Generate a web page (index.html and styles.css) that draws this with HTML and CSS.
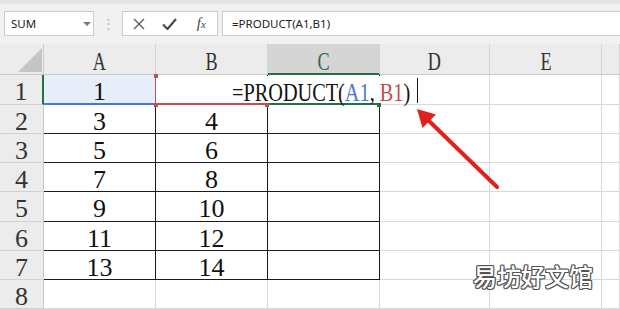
FILE: index.html
```html
<!DOCTYPE html>
<html lang="zh">
<head>
  <meta charset="UTF-8">
  <title>PRODUCT</title>
  <link rel="stylesheet" href="styles.css">
</head>
<body>

  <!-- 编辑栏 -->
  <div class="toolbar">
    <div class="namebox">SUM <span class="caret"></span></div>
    <div class="sep">⋮</div>
    <div class="fxbox">
      <span class="ico">
        <svg width="12" height="12" viewBox="0 0 12 12"><path d="M1 1L11 11M11 1L1 11" stroke="#5a5a5a" stroke-width="1.3" fill="none"/></svg>
      </span>
      <span class="ico">
        <svg width="15" height="12" viewBox="0 0 15 12"><path d="M1 6.5L5.5 11L14 1" stroke="#4a4a4a" stroke-width="2.2" fill="none"/></svg>
      </span>
      <span class="ico fx"><i>f</i><small>x</small></span>
    </div>
    <div class="formula">=PRODUCT(A1,B1)</div>
  </div>

  <!-- 表格 -->
  <div class="sheet" id="sheet">
    <div class="editor"><span class="etext">=PRODUCT(<span class="ref1">A1</span>, <span class="ref2">B1</span>)</span></div>
    <span class="handle red h1"></span>
    <span class="handle red h2"></span>
    <span class="handle red h3"></span>
    <span class="handle green h4"></span>
  </div>

  <svg class="arrow" width="620" height="309" viewBox="0 0 620 309">
    <line x1="497" y1="187" x2="428" y2="120" stroke="#e3201c" stroke-width="4" stroke-linecap="round"/>
    <polygon points="417,109 436,114.5 422.5,128" fill="#e3201c"/>
  </svg>

  <div class="watermark">易坊好文馆</div>

  <script>
    const sheet = document.getElementById("sheet");
    const letters = ["A", "B", "C", "D", "E", ""];
    const rows = [
      ["1", "", ""], ["3", "4", ""], ["5", "6", ""], ["7", "8", ""],
      ["9", "10", ""], ["11", "12", ""], ["13", "14", ""]
    ];

    let html = '<div class="corner"><svg width="44" height="31"><polygon points="18,28 42,28 42,4" fill="#c4c4c4"/></svg></div>';
    letters.forEach(l => {
      html += `<div class="colhead${l === "C" ? " sel" : ""}"><span class="lt">${l}</span></div>`;
    });
    for (let r = 1; r <= 8; r++) {
      html += `<div class="rowhead${r === 1 ? " act" : ""}">${r}</div>`;
      for (let c = 0; c < 6; c++) {
        const v = rows[r - 1] ? (rows[r - 1][c] || "") : "";
        let cls = "cell";
        if (r <= 7 && c < 3) cls += " tbl";
        if (r === 1 && c < 3) cls += " r1c" + c;
        html += `<div class="${cls}">${v}</div>`;
      }
    }
    sheet.insertAdjacentHTML("afterbegin", html);
  </script>
</body>
</html>
```

FILE: styles.css
```css
* { box-sizing: border-box; }
body { margin: 0; background: #fff; font-family: "Liberation Serif", serif; overflow: hidden; width: 620px; height: 309px; position: relative; }

.toolbar { height: 44px; background: #f1f1f1; border-top: 4px solid #e4e4e4; display: flex; align-items: flex-start; padding: 7px 0 0 4px; font-family: "Noto Sans", sans-serif; }
.namebox { width: 90px; height: 25px; background: #fff; border: 1px solid #cbcbcb; font-size: 11.5px; line-height: 23px; padding-left: 6px; color: #222; position: relative; }
.caret { position: absolute; left: 78px; top: 10px; border-left: 4px solid transparent; border-right: 4px solid transparent; border-top: 4px solid #777; }
.sep { width: 28px; text-align: center; color: #b8b8b8; font-size: 13px; line-height: 25px; }
.fxbox { width: 96px; height: 25px; background: #fff; border: 1px solid #cbcbcb; display: flex; align-items: center; }
.ico { width: 32px; display: flex; justify-content: center; align-items: center; }
.fx { font-family: "Liberation Serif", serif; font-size: 15px; color: #444; font-style: italic; }
.fx small { font-size: 11px; }
.formula { flex: 1; height: 25px; margin-left: 4px; background: #fff; border: 1px solid #cbcbcb; border-right: none; font-size: 11.5px; line-height: 23px; padding-left: 9px; color: #222; }

.sheet { display: grid; grid-template-columns: 44px 112px 112px 112px 110px 112px 1fr; grid-template-rows: 31px 30px 29px 29px 29px 30px 29px 29px 29px; position: relative; }
.corner { background: #ececec; border-right: 1px solid #c9c9c9; border-bottom: 1px solid #c9c9c9; }
.colhead { background: #ececec; border-right: 1px solid #d2d2d2; border-bottom: 1px solid #c9c9c9; text-align: center; font-size: 26px; line-height: 24px; padding-top: 6px; color: #333; }
.colhead.sel { background: #d5d5d5; border-bottom: 2px solid #217346; color: #2e6b4c; }
.lt { display: inline-block; transform: scaleX(0.7); }
.rowhead { background: #ececec; border-right: 1px solid #c9c9c9; border-bottom: 1px solid #d2d2d2; text-align: center; font-size: 26px; line-height: 24px; padding-top: 5px; color: #333; }
.rowhead.act { border-right: 2px solid #217346; }
.cell { border-right: 1px solid #d8d8d8; border-bottom: 1px solid #d8d8d8; text-align: center; font-size: 26px; line-height: 24px; padding-top: 5px; color: #111; }
.cell.tbl { border-right-color: #1a1a1a; border-bottom-color: #1a1a1a; }
.r1c0 { background: #e7eefa; border-bottom: 2px solid #4a78cc !important; border-right-color: #c0504d !important; }
.r1c1 { border-bottom: 2px solid #c0504d !important; }
.r1c2 { border-bottom: 2px solid #217346 !important; }

.editor { position: absolute; left: 157px; top: 32px; width: 261px; height: 27px; background: #fff; padding: 5px 0 0 75px; font-size: 26px; line-height: 24px; color: #111; white-space: nowrap; }
.editor::after { content: ""; position: absolute; right: 0; top: 2px; bottom: 0; width: 1px; background: #111; }
.etext { display: inline-block; transform: scaleX(0.78); transform-origin: left; }
.ref1 { color: #4a78cc; }
.ref2 { color: #c0504d; }

.handle { position: absolute; width: 4px; height: 4px; }
.handle.red { background: #c0504d; }
.handle.green { background: #217346; }
.h1 { left: 154px; top: 30px; }
.h2 { left: 154px; top: 59px; }
.h3 { left: 265px; top: 59px; }
.h4 { left: 377px; top: 59px; }

.arrow { position: absolute; left: 0; top: 0; pointer-events: none; }
.watermark { position: absolute; left: 473px; top: 264px; font-family: "Noto Sans CJK SC", sans-serif; font-size: 24px; line-height: 24px; font-weight: 500; color: #fff; text-shadow: 1px 0 0 #555, -1px 0 0 #555, 0 1px 0 #555, 0 -1px 0 #555, 1px 1px 0 #555, -1px -1px 0 #555, 1px -1px 0 #555, -1px 1px 0 #555; }
```
